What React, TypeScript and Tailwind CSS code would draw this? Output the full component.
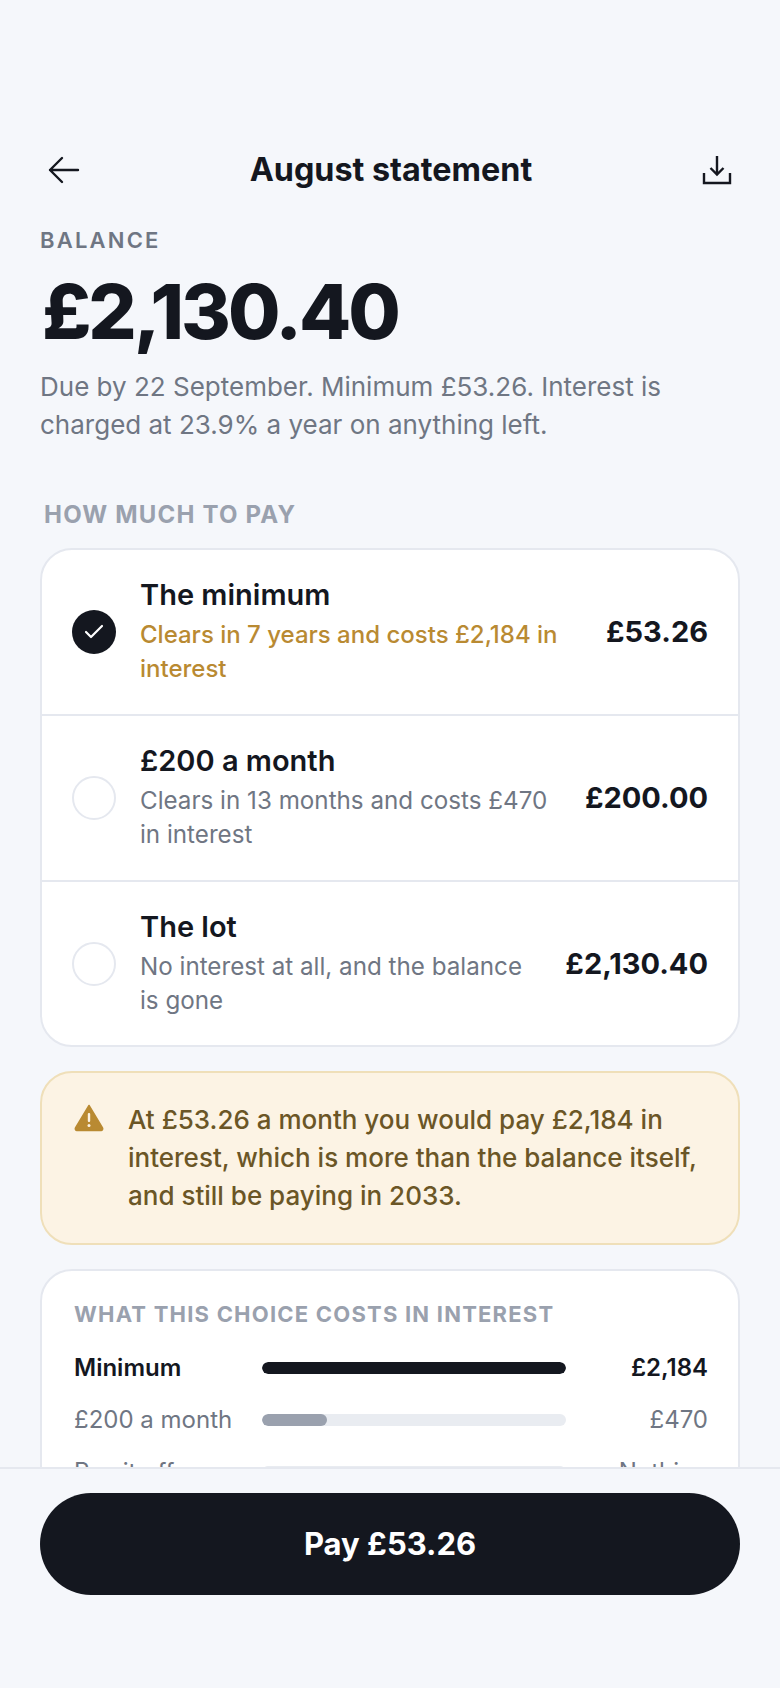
import { Check } from "lucide-react"

const options = [
    { title: "The minimum", note: "Clears in 7 years and costs £2,184 in interest", amount: "£53.26", selected: true, rowClass: "h-[164px]" },
    { title: "£200 a month", note: "Clears in 13 months and costs £470 in interest", amount: "£200.00", selected: false, rowClass: "h-[166px] border-t-2 border-[#e5e8ef]" },
    { title: "The lot", note: "No interest at all, and the balance is gone", amount: "£2,130.40", selected: false, rowClass: "h-[165px] border-t-2 border-[#e5e8ef]" },
]

const costs = [
    { label: "Minimum", value: "£2,184", width: 100, strong: true },
    { label: "£200 a month", value: "£470", width: 21.5, strong: false },
    { label: "Pay it off", value: "Nothing", width: 0, strong: false },
]

export default function App() {
    return (
        <div className="h-[1688px] w-[780px] overflow-hidden bg-[#f5f7fb] font-['Inter',sans-serif] text-[#14171f] flex flex-col">
            <div className="flex-1 min-h-0 overflow-hidden px-10 pt-[140px]">
                <header className="flex items-center justify-between h-[60px] px-2">
                    <svg viewBox="0 0 32 28" className="w-[32px] h-[28px]" fill="none" stroke="currentColor" strokeWidth="2.4" strokeLinecap="round" strokeLinejoin="round">
                        <path d="M30 14H2M14 2 2 14l12 12" />
                    </svg>
                    <h1 className="text-[32.3px] font-bold">August statement</h1>
                    <svg viewBox="0 0 30 30" className="w-[30px] h-[30px]" fill="none" stroke="currentColor" strokeWidth="2.4" strokeLinejoin="miter">
                        <path d="M2 18V28H28V18M15 1V19.5M8.5 13 15 19.5 21.5 13" />
                    </svg>
                </header>

                <p className="mt-[25px] text-[22px] leading-[30px] font-semibold tracking-[0.1em] text-[#6f7683]">BALANCE</p>
                <p className="mt-[8px] ml-[2px] text-[76px] leading-[96px] font-extrabold tracking-[-0.04em]">£2,130.40</p>
                <p className="mt-[9px] text-[26px] leading-[38px] text-[#6f7683]">
                    Due by 22 September. Minimum £53.26. Interest is charged at 23.9% a year on anything left.
                </p>

                <p className="mt-[55px] px-1 text-[24px] leading-[32px] font-bold tracking-[0.05em] text-[#9aa1ae]">HOW MUCH TO PAY</p>

                <div className="mt-[17px] rounded-[32px] border-2 border-[#e5e8ef] bg-white overflow-hidden">
                    {options.map((o) => (
                        <div key={o.title} className={`${o.rowClass} flex items-center gap-6 pl-[30px] pr-[30px]`}>
                            {o.selected ? (
                                <span className="w-[44px] h-[44px] shrink-0 rounded-full bg-[#14171f] flex items-center justify-center text-white">
                                    <Check size={24} strokeWidth={2.2} />
                                </span>
                            ) : (
                                <span className="w-[44px] h-[44px] shrink-0 rounded-full border-2 border-[#e5e8ef]" />
                            )}
                            <div className="flex-1 min-w-0 pb-[2px]">
                                <p className="text-[29px] leading-[38px] font-semibold">{o.title}</p>
                                <p className={`mt-[4px] leading-[34px] ${o.selected ? "text-[24px] text-[#b98a32] font-medium" : "text-[24.2px] text-[#6f7683]"}`}>{o.note}</p>
                            </div>
                            <span className="shrink-0 text-[29px] font-bold">{o.amount}</span>
                        </div>
                    ))}
                </div>

                <div className="mt-[24px] h-[174px] rounded-[32px] border-2 border-[#efdfb9] bg-[#fcf3e4] flex gap-6 pl-[32px] pr-[30px] pt-[28px]">
                    <svg viewBox="0 0 30 28" className="w-[30px] h-[28px] mt-[3px] shrink-0">
                        <path d="M15 1.5 L28.5 24 a1.6 1.6 0 0 1 -1.4 2.4 H2.9 a1.6 1.6 0 0 1 -1.4 -2.4 Z" fill="#b98a32" stroke="#b98a32" strokeWidth="1.5" strokeLinejoin="round" />
                        <rect x="13.8" y="9" width="2.4" height="9" rx="1" fill="#fcf3e4" />
                        <circle cx="15" cy="21.5" r="1.5" fill="#fcf3e4" />
                    </svg>
                    <p className="text-[26px] leading-[38px] font-medium text-[#6b5626]">
                        At £53.26 a month you would pay £2,184 in interest, which is more than the balance itself, and still be paying in 2033.
                    </p>
                </div>

                <div className="mt-[24px] rounded-[32px] border-2 border-[#e5e8ef] bg-white pl-[32px] pr-[30px] pt-[28px] pb-[30px]">
                    <p className="text-[22px] leading-[30px] font-bold tracking-[0.055em] text-[#9aa1ae]">WHAT THIS CHOICE COSTS IN INTEREST</p>
                    <div className="mt-[23px] flex flex-col gap-[20px]">
                        {costs.map((c) => (
                            <div key={c.label} className="flex items-center h-[32px]">
                                <span className={`w-[188px] shrink-0 text-[24px] ${c.strong ? "font-semibold" : "text-[#6f7683]"}`}>{c.label}</span>
                                <div className="w-[304px] h-[12px] rounded-full bg-[#e9ecf1] overflow-hidden">
                                    <div className={`h-full rounded-full ${c.strong ? "bg-[#14171f]" : "bg-[#9aa1ae]"}`} style={{ width: `${c.width}%` }} />
                                </div>
                                <span className={`flex-1 text-right text-[24px] ${c.strong ? "font-semibold" : "text-[#6f7683]"}`}>{c.value}</span>
                            </div>
                        ))}
                    </div>
                </div>
            </div>

            <footer className="shrink-0 h-[221px] border-t-2 border-[#e5e8ef] bg-[#f5f7fb] px-10 pt-[24px]">
                <button className="w-full h-[102px] rounded-full bg-[#14171f] text-white text-[31px] font-bold">Pay £53.26</button>
            </footer>
        </div>
    )
}
